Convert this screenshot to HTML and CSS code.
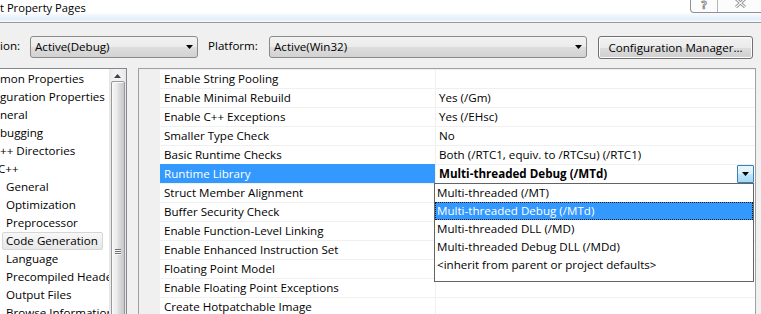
FILE: index.html
```html
<!DOCTYPE html>
<html>
<head>
<meta charset="utf-8">
<link rel="stylesheet" href="styles.css">
</head>
<body>
<div class="titlebar">
  <span class="title">t Property Pages</span>
  <div class="caption">
    <span class="cbtn help">?</span>
    <span class="cbtn close"><svg width="11" height="9" viewBox="0 0 11 9"><path d="M1 0 L10 8 M10 0 L1 8" stroke="#8a8a8a" stroke-width="3"/><path d="M1 0 L10 8 M10 0 L1 8" stroke="#fafafa" stroke-width="1.2"/></svg></span>
  </div>
</div>

<div class="toolbar">
  <span class="lbl lbl1">ion:</span>
  <div class="combo combo1"><span>Active(Debug)</span><svg class="arrow" width="7" height="4" viewBox="0 0 7 4"><path d="M0 0H7L3.5 4Z"/></svg></div>
  <span class="lbl lbl2">Platform:</span>
  <div class="combo combo2"><span>Active(Win32)</span><svg class="arrow" width="7" height="4" viewBox="0 0 7 4"><path d="M0 0H7L3.5 4Z"/></svg></div>
  <div class="btn">Configuration Manager...</div>
</div>

<div class="main">
  <div class="tree">
    <div class="tree-list">
      <div class="ti">mon Properties</div>
      <div class="ti">guration Properties</div>
      <div class="ti">neral</div>
      <div class="ti">bugging</div>
      <div class="ti">++ Directories</div>
      <div class="ti clip">C++</div>
      <div class="ti l2">General</div>
      <div class="ti l2">Optimization</div>
      <div class="ti l2">Preprocessor</div>
      <div class="ti"><span class="tsel">Code Generation</span></div>
      <div class="ti l2">Language</div>
      <div class="ti l2">Precompiled Headers</div>
      <div class="ti l2">Output Files</div>
      <div class="ti l2">Browse Information</div>
    </div>
    <div class="vscroll">
      <div class="sbtn"><svg width="7" height="4" viewBox="0 0 7 4"><path d="M0 4H7L3.5 0Z" fill="#404040"/></svg></div>
      <div class="thumb"><div class="grip"><i></i><i></i><i></i></div></div>
    </div>
  </div>

  <div class="grid">
    <div class="row"><div class="gut"></div><div class="name">Enable String Pooling</div><div class="val"></div></div>
    <div class="row"><div class="gut"></div><div class="name">Enable Minimal Rebuild</div><div class="val">Yes (/Gm)</div></div>
    <div class="row"><div class="gut"></div><div class="name">Enable C++ Exceptions</div><div class="val">Yes (/EHsc)</div></div>
    <div class="row"><div class="gut"></div><div class="name">Smaller Type Check</div><div class="val">No</div></div>
    <div class="row"><div class="gut"></div><div class="name">Basic Runtime Checks</div><div class="val">Both (/RTC1, equiv. to /RTCsu) (/RTC1)</div></div>
    <div class="row"><div class="gut"></div><div class="name selname">Runtime Library</div>
      <div class="val edit">
        <span class="edit-text">Multi-threaded Debug (/MTd)</span>
        <span class="ddbtn"><svg width="7" height="4" viewBox="0 0 7 4"><path d="M0 0H7L3.5 4Z"/></svg></span>
        <div class="droplist">
          <div class="opt">Multi-threaded (/MT)</div>
          <div class="opt optsel">Multi-threaded Debug (/MTd)</div>
          <div class="opt">Multi-threaded DLL (/MD)</div>
          <div class="opt">Multi-threaded Debug DLL (/MDd)</div>
          <div class="opt">&lt;inherit from parent or project defaults&gt;</div>
        </div>
      </div>
    </div>
    <div class="row"><div class="gut"></div><div class="name">Struct Member Alignment</div><div class="val"></div></div>
    <div class="row"><div class="gut"></div><div class="name">Buffer Security Check</div><div class="val"></div></div>
    <div class="row"><div class="gut"></div><div class="name">Enable Function-Level Linking</div><div class="val"></div></div>
    <div class="row"><div class="gut"></div><div class="name">Enable Enhanced Instruction Set</div><div class="val"></div></div>
    <div class="row"><div class="gut"></div><div class="name">Floating Point Model</div><div class="val"></div></div>
    <div class="row"><div class="gut"></div><div class="name">Enable Floating Point Exceptions</div><div class="val"></div></div>
    <div class="row"><div class="gut"></div><div class="name">Create Hotpatchable Image</div><div class="val"></div></div>
  </div>
</div>
</body>
</html>
```

FILE: styles.css
```css
* { box-sizing: border-box; }
html, body { margin: 0; padding: 0; }
body {
  width: 761px;
  height: 314px;
  overflow: hidden;
  background: #f0f0f0;
  font-family: "Open Sans", "Noto Sans", sans-serif;
  font-size: 11.6px;
  color: #000;
}

/* title bar */
.titlebar {
  position: relative;
  height: 23px;
  border-bottom: 1px solid #9a9a9a;
  background: linear-gradient(180deg, #ffffff 0, #ffffff 12px, #eef5fc 16px, #e2eef9 19px, #f3f8fd 22px);
}
.title {
  display: block;
  line-height: 16px;
  font-size: 11.2px;
}
.caption {
  position: absolute;
  top: 0;
  left: 690px;
  display: flex;
  height: 13px;
  border: 1px solid #8f9091;
  border-top: none;
  border-bottom-left-radius: 4px;
  background: #fcfcfc;
}
.cbtn {
  display: flex;
  justify-content: center;
  align-items: flex-start;
  height: 12px;
}
.help {
  width: 27px;
  border-right: 1px solid #b5b5b5;
  font-weight: bold;
  font-size: 11px;
  line-height: 9px;
  color: #fff;
  -webkit-text-stroke: 0.8px #7d7d7d;
}
.close { width: 48px; padding-right: 3px; }
.close svg { display: block; margin-top: -1px; }

/* toolbar */
.toolbar {
  display: flex;
  align-items: flex-start;
  padding-top: 13px;
  height: 36px;
}
.lbl { line-height: 20px; white-space: nowrap; }
.lbl1 { width: 30px; }
.lbl2 { width: 61px; margin-left: 10px; }
.combo {
  height: 22px;
  border: 1px solid #8a8a8a;
  border-radius: 3px;
  background: linear-gradient(180deg, #f2f2f2 0%, #ebebeb 50%, #dddddd 51%, #d2d2d2 100%);
  display: flex;
  align-items: center;
  justify-content: space-between;
  padding: 0 4px 0 4px;
  line-height: 18px;
}
.combo1 { width: 168px; }
.combo2 { width: 318px; }
.arrow { display: block; }
.btn {
  margin-left: 11px;
  width: 155px;
  height: 23px;
  border: 1px solid #707070;
  border-radius: 3px;
  background: linear-gradient(180deg, #f2f2f2 0%, #ebebeb 50%, #dddddd 51%, #cfcfcf 100%);
  display: flex;
  align-items: center;
  justify-content: center;
  line-height: 18px;
  box-shadow: inset 0 0 0 1px #fcfcfc;
}

/* main area */
.main {
  display: flex;
  align-items: flex-start;
  margin-top: 9px;
}
.tree {
  width: 127px;
  height: 260px;
  border: 1px solid #828790;
  border-left: none;
  background: #fff;
  display: flex;
}
.tree-list {
  flex: 1;
  min-width: 0;
  overflow: hidden;
  padding-top: 1px;
}
.ti {
  height: 18px;
  line-height: 18px;
  white-space: nowrap;
}
.l2 { padding-left: 6px; }
.clip { text-indent: -2px; }
.tsel {
  display: inline-block;
  margin-left: 2px;
  height: 18px;
  line-height: 16px;
  padding: 0 4px 0 3px;
  border: 1px solid #d6d6d6;
  border-radius: 2px;
  background: linear-gradient(180deg, #f8f8f8, #e7e7e7);
}

.vscroll {
  width: 17px;
  display: flex;
  flex-direction: column;
  background: linear-gradient(90deg, #e3e3e3 0, #eeeeee 2px, #f3f3f3 8px, #ececec 15px, #e6e6e6 17px);
}
.sbtn {
  height: 19px;
  display: flex;
  justify-content: center;
  align-items: center;
  padding-top: 1px;
}
.sbtn svg { display: block; }
.thumb {
  margin: 0 1px 0 2px;
  height: 400px;
  border: 1px solid #999999;
  border-radius: 2px;
  background: linear-gradient(90deg, #f5f5f5 0%, #ebebeb 40%, #dadada 60%, #c8c8c8 100%);
  box-shadow: inset 1px 1px 0 #fafafa;
}
.grip {
  margin: 167px auto 0;
  width: 6px;
  display: flex;
  flex-direction: column;
  gap: 1px;
}
.grip i {
  display: block;
  height: 1px;
  background: #6f6f6f;
  box-shadow: 0 1px 0 #f7f7f7;
}

/* property grid */
.grid {
  margin-left: 11px;
  width: 618px;
  height: 260px;
  border: 1px solid #a0a0a0;
  background: #fff;
}
.row {
  display: flex;
  height: 19px;
}
.gut {
  width: 21px;
  background: #f0f0f0;
}
.name {
  width: 275px;
  border-top: 1px solid #f0f0f0;
  padding-left: 4px;
  line-height: 18px;
  white-space: nowrap;
}
.selname {
  background: #3399ff;
  border-top-color: #3399ff;
  color: #fff;
}
.val {
  flex: 1;
  border-top: 1px solid #f0f0f0;
  border-left: 1px solid #f0f0f0;
  padding-left: 3px;
  line-height: 18px;
  white-space: nowrap;
  position: relative;
}
.edit {
  display: flex;
}
.edit-text {
  flex: 1;
  font-weight: bold;
}
.ddbtn {
  width: 17px;
  height: 18px;
  margin-right: 1px;
  border: 1px solid #3c7fb1;
  border-radius: 1px;
  background: linear-gradient(180deg, #eaf6fd 0%, #d9f0fc 50%, #bee6fd 51%, #a7d9f5 100%);
  display: flex;
  align-items: center;
  justify-content: center;
}
.ddbtn svg { display: block; }

.droplist {
  position: absolute;
  top: 100%;
  left: -2px;
  width: 320px;
  border: 1px solid #646464;
  background: #fff;
  padding-bottom: 7px;
  z-index: 2;
}
.opt {
  height: 18px;
  line-height: 18px;
  padding-left: 2px;
  font-weight: normal;
}
.optsel {
  background: #3399ff;
  color: #fff;
  outline: 1px dotted #1a1a1a;
  outline-offset: -1px;
}
```
